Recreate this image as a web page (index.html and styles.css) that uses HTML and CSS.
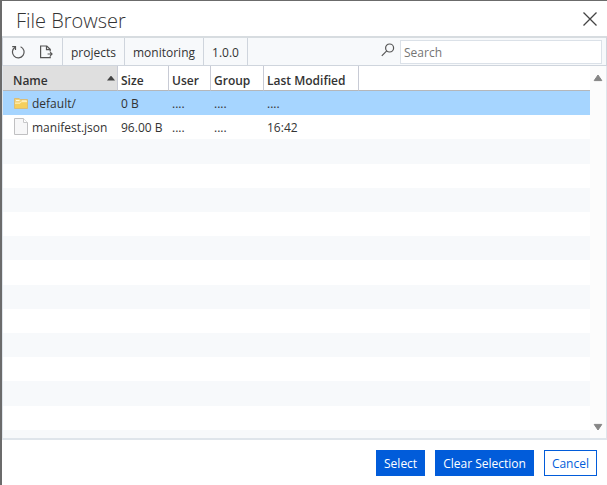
FILE: index.html
```html
<!DOCTYPE html>
<html lang="en">
<head>
<meta charset="utf-8">
<title>File Browser</title>
<link rel="stylesheet" href="styles.css">
</head>
<body>
<main class="dialog">
  <header class="titlebar">
    <h1>File Browser</h1>
    <button class="close" type="button" aria-label="Close">
      <svg width="14" height="14" viewBox="0 0 14 14"><path d="M.5.5l13 13M13.5.5l-13 13" fill="none" stroke="#444" stroke-width="1.3"/></svg>
    </button>
  </header>
  <div class="toolbar">
    <div class="actions">
      <button type="button" aria-label="Refresh">
        <svg width="14" height="14" viewBox="0 0 14 14" fill="none" stroke="#555" stroke-width="1.2"><path d="M4 2.2A5.8 5.8 0 1 0 9.6 1.7"/><path d="M1.2 1.7h3.3V5"/></svg>
      </button>
      <button type="button" aria-label="New file">
        <svg width="14" height="14" viewBox="0 0 14 14" fill="none" stroke="#555" stroke-width="1.2"><path d="M11.2 6.5V4.3L7.8 1H1.6v11.6h9.6v-1.4"/><path d="M7.5 1v3.6h3.7M8.6 9h4.6M11.2 7.2L13 9l-1.8 1.8"/></svg>
      </button>
    </div>
    <nav class="crumbs" aria-label="Path">
      <a href="#projects">projects</a>
      <a href="#monitoring">monitoring</a>
      <a href="#version">1.0.0</a>
    </nav>
    <div class="search">
      <label for="search" aria-label="Search">
        <svg width="14" height="14" viewBox="0 0 14 14" fill="none" stroke="#555" stroke-width="1.2"><circle cx="8.6" cy="5" r="4"/><path d="M5.7 7.9L.8 12.8"/></svg>
      </label>
      <input id="search" type="text" placeholder="Search">
    </div>
  </div>
  <section class="listing">
    <div class="table-wrap">
      <table>
        <colgroup><col class="c-name"><col class="c-size"><col class="c-user"><col class="c-group"><col class="c-modified"><col></colgroup>
        <thead>
          <tr><th class="sorted" aria-sort="ascending"><span>Name</span></th><th>Size</th><th>User</th><th>Group</th><th>Last Modified</th><th></th></tr>
        </thead>
        <tbody>
          <tr class="selected">
            <td><span class="file"><svg width="14" height="14" viewBox="0 0 14 14"><path d="M.5 12.5V2.5h4.7l1 1h7.3v9z" fill="#f3d37c" stroke="#d9bd78"/><path d="M2 4.5h3.5M8 5h4.5" stroke="#fff8dc"/><path d="M1 12V7h5l1.4-1.5H13V12z" fill="#f5cf5c"/><path d="M1 7.2h5.1l1.4-1.5H13" fill="none" stroke="#fff3c0"/></svg>default/</span></td>
            <td>0 B</td><td>....</td><td>....</td><td>....</td><td></td>
          </tr>
          <tr>
            <td><span class="file"><svg width="14" height="17" viewBox="0 0 14 17"><path d="M.5.5h9l4 4v12H.5z" fill="#f7f7f8" stroke="#c0c0c2"/><path d="M9.5.5v4h4" fill="#fff" stroke="#c8c8ca"/></svg>manifest.json</span></td>
            <td>96.00 B</td><td>....</td><td>....</td><td>16:42</td><td></td>
          </tr>
          <tr><td colspan="6"></td></tr>
          <tr><td colspan="6"></td></tr>
          <tr><td colspan="6"></td></tr>
          <tr><td colspan="6"></td></tr>
          <tr><td colspan="6"></td></tr>
          <tr><td colspan="6"></td></tr>
          <tr><td colspan="6"></td></tr>
          <tr><td colspan="6"></td></tr>
          <tr><td colspan="6"></td></tr>
          <tr><td colspan="6"></td></tr>
          <tr><td colspan="6"></td></tr>
          <tr><td colspan="6"></td></tr>
        </tbody>
      </table>
      <div class="stub"></div>
    </div>
    <div class="scrollbar" aria-hidden="true">
      <svg width="10" height="8" viewBox="0 0 10 8"><path d="M5 1l3.8 5.6H1.2z" fill="#858585" stroke="#858585" stroke-linejoin="round"/></svg>
      <svg width="10" height="8" viewBox="0 0 10 8"><path d="M5 7L1.2 1.4h7.6z" fill="#858585" stroke="#858585" stroke-linejoin="round"/></svg>
    </div>
  </section>
  <footer class="footer">
    <button class="btn primary" type="button">Select</button>
    <button class="btn primary" type="button">Clear Selection</button>
    <button class="btn" type="button">Cancel</button>
  </footer>
</main>
</body>
</html>
```
FILE: styles.css
```css
* { box-sizing: border-box; }
body {
  margin: 0;
  font: 12px/16px "Open Sans", "Noto Sans", sans-serif;
  color: #333;
  background: #fff;
}
button, input { font: inherit; color: inherit; }
svg { display: block; flex: none; }
.dialog {
  display: flex;
  flex-direction: column;
  height: 100vh;
  border-top: 1px solid #6b6b6b;
  border-left: 2px solid #6b6b6b;
}
.titlebar {
  display: flex;
  align-items: center;
  justify-content: space-between;
  height: 35px;
  padding: 0 8px 0 14px;
}
h1 { margin: 0; padding-top: 4px; font-size: 20px; line-height: 28px; font-weight: 300; }
.close { padding: 0 2px; border: 0; background: none; }
.toolbar {
  display: flex;
  height: 30px;
  border: 1px solid #cfd5dd;
  border-top: 2px solid #d7dce0;
  background: #f7f9fb;
}
.actions {
  display: flex;
  align-items: center;
  gap: 14px;
  padding: 0 9px 0 8px;
}
.actions button { padding: 0; border: 0; background: none; }
.crumbs { display: flex; border-right: 1px solid #cfd5dd; }
.crumbs a {
  padding: 7px 8px 0;
  border-left: 1px solid #cfd5dd;
  color: inherit;
  text-decoration: none;
}
.search {
  display: flex;
  flex: 1;
  justify-content: flex-end;
  align-items: center;
  gap: 5px;
  padding-right: 4px;
}
.search label { padding-bottom: 3px; }
.search input {
  width: 202px;
  height: 24px;
  padding: 2px 3px 0;
  border: 1px solid #dbe1e8;
  background: #fff;
}
.search input::placeholder { color: #757575; opacity: 1; }
.listing {
  display: flex;
  flex: 1;
  min-height: 0;
  border: solid #dfe5eb;
  border-width: 0 1px 2px;
}
.table-wrap { display: flex; flex: 1; flex-direction: column; overflow: hidden; }
table {
  flex: 1;
  width: 100%;
  table-layout: fixed;
  border-collapse: separate;
  border-spacing: 0;
}
.c-name { width: 115px; }
.c-size { width: 51px; }
.c-user { width: 42px; }
.c-group { width: 53px; }
.c-modified { width: 95px; }
th, td { padding: 0 0 0 3px; text-align: left; white-space: nowrap; }
th {
  height: 25px;
  padding-top: 5px;
  border-right: 1px solid #c8cbd5;
  border-bottom: 1px solid #b5b7ba;
  font-weight: 600;
}
th:last-child { border-right: 0; }
th.sorted { padding-left: 10px; background: #dfdfdf; }
.sorted span { display: flex; justify-content: space-between; padding-right: 2px; }
.sorted span::after {
  content: "";
  width: 8px;
  height: 5px;
  margin-top: 3px;
  background: #444;
  clip-path: polygon(50% 0, 100% 100%, 0 100%);
}
td { height: 24px; padding-top: 2px; }
td:first-child { padding-left: 11px; }
tbody tr:nth-child(odd) { background: #f7f9fb; }
tbody tr.selected { background: #a6d5ff; }
.file { display: flex; align-items: center; gap: 4px; height: 17px; }
.file svg { margin-top: -3px; }
.stub { flex: none; height: 8px; background: #f7f9fb; }
.scrollbar {
  display: flex;
  flex-direction: column;
  justify-content: space-between;
  align-items: center;
  width: 16px;
  padding: 8px 0 7px;
  background: #fcfcfc;
}
.footer {
  display: flex;
  justify-content: flex-end;
  align-items: flex-start;
  gap: 10px;
  padding: 10px 10px 9px;
}
.btn {
  height: 26px;
  padding: 1px 7px 0;
  border: 1px solid #015cda;
  background: #fff;
  color: #015cda;
}
.btn.primary { background: #015cda; color: #fff; }
```
